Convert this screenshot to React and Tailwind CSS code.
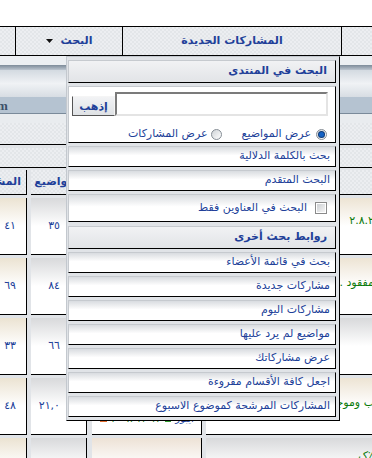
import React from 'react';

// vBulletin-style forum page with the "البحث" dropdown open

const checker = "bg-[#e6e8eb] bg-[image:repeating-conic-gradient(#e3e6e9_0_25%,#eceef1_0_50%)] bg-[length:4px_4px]";
const linkRow = "h-[21px] shrink-0 flex items-center pr-[5px] border border-[#c6cacf] border-r-black border-b-black bg-linear-to-b from-[#d9dce0] via-white via-45% to-white text-[11px] text-[#213f99] whitespace-nowrap";
const headRow = "h-[23px] shrink-0 flex items-center pr-[8px] border border-[#c6cacf] border-r-black border-b-black bg-linear-to-b from-[#f1f2f4] to-[#e2e4e7] text-[11px] font-bold text-[#213f99] whitespace-nowrap";

const otherLinks = [
  'بحث في قائمة الأعضاء',
  'مشاركات جديدة',
  'مشاركات اليوم',
  'مواضيع لم يرد عليها',
  'عرض مشاركاتك',
  'اجعل كافة الأقسام مقروءة',
  'المشاركات المرشحة كموضوع الاسبوع',
];

const rows = [
  { posts: '٤١', threads: '٣٥', note: '٢.٨.٢', noteTop: 'pt-[15px]', tone: 'cream' },
  { posts: '٦٩', threads: '٨٤', note: 'مفقود ..', noteTop: 'pt-[17px]', tone: 'cream' },
  { posts: '٣٣', threads: '٦٦', note: '', noteTop: 'pt-[15px]', tone: 'gray' },
  { posts: '٤٨', threads: '٢١,٠', note: 'ب وموجـ', noteTop: 'pt-[17px]', tone: 'cream' },
  { posts: '', threads: '', note: '٪ک', noteTop: 'pt-[10px]', tone: 'gray' },
];

const Radio = ({ checked }) => (
  <span className="w-[11px] h-[11px] shrink-0 rounded-full border border-[#858d95] bg-linear-to-br from-[#cfd3d7] to-white flex items-center justify-center">
    {checked && <span className="w-[5px] h-[5px] rounded-full bg-[#1462c4] ring-1 ring-[#0d3b78]" />}
  </span>
);

const SearchMenu = () => (
  <div dir="rtl" className="absolute left-[66px] top-[56px] w-[274px] h-[365px] flex flex-col gap-[3px] pt-[3px] pb-[3px] pl-[1px] pr-[3px] bg-[#e0e3e7] border border-[#c3c8ce] border-r-black border-b-black">
    <div className={headRow}>البحث في المنتدى</div>

    <div className="h-[57px] shrink-0 flex flex-col border border-[#c6cacf] border-r-black border-b-black bg-white">
      <div className="flex items-end mt-[5px] mr-[7px] ml-[3px]">
        <div className="h-[24px] flex-1 border-2 border-t-[#7b7b7b] border-r-[#e4e4e4] border-b-[#e4e4e4] border-l-[#7b7b7b] bg-white" />
        <button className="w-[43px] h-[20px] shrink-0 border border-t-[#f5f5f5] border-r-[#f5f5f5] border-b-[#555] border-l-[#555] bg-linear-to-b from-[#f2f3f5] to-[#dfe2e5] text-[11px] font-bold text-[#213f99] leading-none">إذهب</button>
      </div>
      <div className="flex items-center mt-[10px] pr-[8px] text-[11px] text-[#213f99] whitespace-nowrap">
        <Radio checked />
        <span className="mr-[5px]">عرض المواضيع</span>
        <span className="mr-[20px]"><Radio /></span>
        <span className="mr-[3px]">عرض المشاركات</span>
      </div>
    </div>

    <div className={linkRow}>بحث بالكلمة الدلالية</div>
    <div className={linkRow}>البحث المتقدم</div>

    <div className="h-[28px] shrink-0 flex items-center pr-[8px] border border-[#c6cacf] border-r-black border-b-black bg-linear-to-b from-[#d9dce0] via-white via-45% to-white text-[11px] text-[#213f99] whitespace-nowrap">
      <span className="w-[12px] h-[12px] shrink-0 border border-[#8a8a8a] bg-white p-px">
        <span className="block w-full h-full bg-linear-to-br from-[#cdd0d3] to-[#f4f4f4]" />
      </span>
      <span className="mr-[8px]">البحث في العناوين فقط</span>
    </div>

    <div className={`${headRow} mt-px`}>روابط بحث أخرى</div>
    {otherLinks.map((t) => (
      <div key={t} className={linkRow}>{t}</div>
    ))}
  </div>
);

export default function App() {
  return (
    <div className="relative w-[372px] h-[458px] overflow-hidden bg-[#e1e4e8] font-['DejaVu_Sans',sans-serif]">
      <div className="h-[26px] bg-white" />

      {/* navbar */}
      <nav className={`h-[30px] flex border-y border-black ${checker}`}>
        <div className="w-[16px] shrink-0 border-r border-black" />
        <div className="w-[107px] shrink-0 border-r border-black flex items-center justify-center gap-[8px]">
          <svg width="7" height="4" viewBox="0 0 7 4"><path d="M0 0h7L3.5 4z" fill="#111" /></svg>
          <span className="text-[11px] font-bold text-[#213f99]">البحث</span>
        </div>
        <div className="w-[219px] shrink-0 border-r border-black flex items-center justify-center">
          <span className="text-[11px] font-bold text-[#213f99]">المشاركات الجديدة</span>
        </div>
        <div className="flex-1" />
      </nav>

      {/* category banner */}
      <div className="h-[9px] bg-[#eceff2]" />
      <div className="h-[5px] bg-linear-to-b from-[#7d8b99] to-[#bcc5cf]" />
      <div className="h-[27px] bg-linear-to-b from-[#d3dae1] via-[#f0f2f5] to-[#d7dde3]" />
      <div className="h-[17px] flex items-center bg-[#b5c3d1] border-b border-[#7a8a9a]">
        <span className="-ml-[3px] font-['Liberation_Serif',serif] font-bold text-[13px] leading-none text-[#3b5068]">m</span>
      </div>
      <div className="h-[9px] bg-[#e9ecef]" />
      <div className={`h-[22px] border-b border-black ${checker}`} />
      <div className="h-[3px]" />
      <div className={`h-[20px] border-b border-black ${checker}`} />
      <div className="h-[2px]" />

      {/* forum table */}
      <div className="flex flex-col gap-[3px]">
        <div className="h-[25px] flex">
          <div className={`w-[57px] -ml-[30px] shrink-0 flex items-center justify-end pr-[5px] border-r border-b border-black text-[11px] font-bold text-[#213f99] whitespace-nowrap ${checker}`}>المشاركات</div>
          <div className={`w-[56px] ml-[4px] shrink-0 flex items-center justify-center border-r border-b border-black text-[11px] font-bold text-[#213f99] whitespace-nowrap ${checker}`}>المواضيع</div>
          <div className={`w-[110px] ml-[5px] shrink-0 border-r border-b border-black ${checker}`} />
          <div className={`flex-1 ml-[4px] border-b border-black ${checker}`} />
        </div>

        {rows.map((r, i) => (
          <div key={i} className="h-[57px] flex">
            <div className="w-[57px] -ml-[30px] shrink-0 flex items-center justify-end pr-[10px] border-r border-b border-black bg-linear-to-b from-[#ebe3d2] via-white via-50% to-white text-[11px] text-[#213f99]">{r.posts}</div>
            <div className="w-[56px] ml-[4px] shrink-0 flex items-center justify-end pr-[26px] border-r border-b border-black bg-linear-to-b from-[#d8d9db] via-white via-50% to-white text-[11px] text-[#213f99] whitespace-nowrap">{r.threads}</div>
            <div className="w-[110px] ml-[5px] shrink-0 flex flex-col justify-end pb-[8px] border-r border-b border-black bg-linear-to-b from-[#ede2d6] via-white via-50% to-white">
              {i === 3 && (
                <div className="flex items-center gap-[4px] pl-[8px] text-[10px] whitespace-nowrap">
                  <span className="w-[7px] h-[7px] bg-[#e06a2c]" />
                  <span className="text-[#0b7a0b]">١٢-١٢-٢٠٠٨</span>
                  <span className="w-[6px] h-[6px] bg-[#2f9a2f]" />
                  <span className="text-[#213f99]">أيبور</span>
                </div>
              )}
            </div>
            <div className={`flex-1 ml-[4px] border-b border-black ${r.tone === 'cream' ? 'bg-linear-to-b from-[#ede4d4] via-white via-50% to-white' : 'bg-linear-to-b from-[#d8d9db] via-white via-50% to-white'}`}>
              <div dir="rtl" className={`${r.noteTop} -mr-[2px] text-right text-[11px] text-[#0b7a0b] whitespace-nowrap`}>{r.note}</div>
            </div>
          </div>
        ))}
      </div>

      <SearchMenu />
    </div>
  );
}
